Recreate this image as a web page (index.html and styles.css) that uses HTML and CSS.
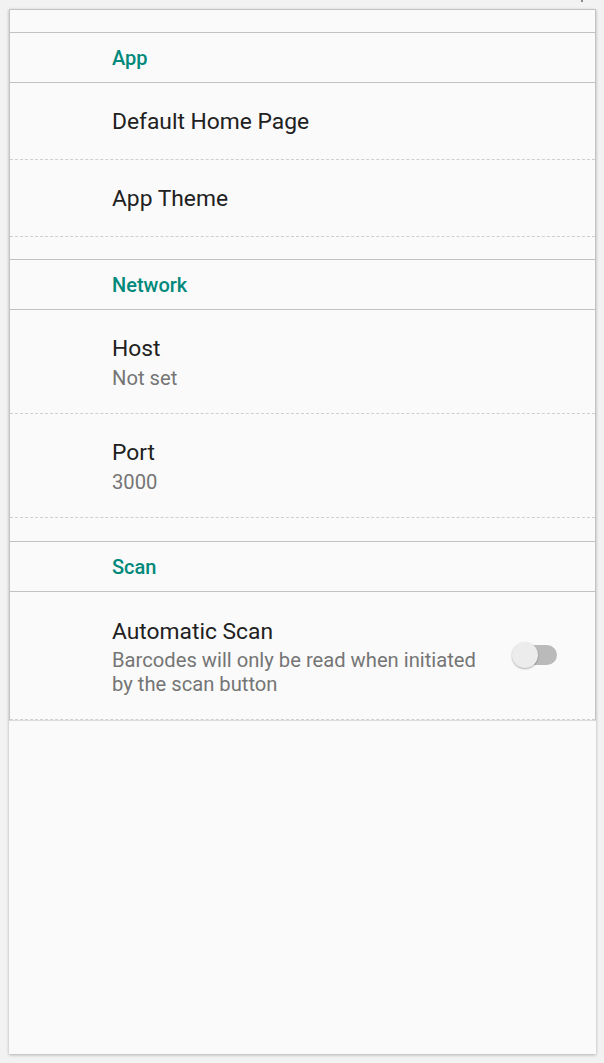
FILE: index.html
```html
<!DOCTYPE html>
<html>
<head>
<meta charset="utf-8">
<link rel="stylesheet" href="styles.css">
</head>
<body>
<span class="corner-mark"></span>
<div class="panel">
  <div class="list">
    <div class="spacer"></div>
    <div class="header">App</div>
    <div class="item single"><div class="text"><div class="title">Default Home Page</div></div></div>
    <div class="item single"><div class="text"><div class="title">App Theme</div></div></div>
    <div class="spacer"></div>
    <div class="header">Network</div>
    <div class="item double"><div class="text"><div class="title">Host</div><div class="sub">Not set</div></div></div>
    <div class="item double"><div class="text"><div class="title">Port</div><div class="sub">3000</div></div></div>
    <div class="spacer tall"></div>
    <div class="header">Scan</div>
    <div class="item triple">
      <div class="text">
        <div class="title">Automatic Scan</div>
        <div class="sub">Barcodes will only be read when initiated by the scan button</div>
      </div>
      <div class="switch"><span class="track"></span><span class="thumb"></span></div>
    </div>
  </div>
</div>
</body>
</html>
```
FILE: styles.css
```css
html, body {
  margin: 0;
  padding: 0;
}
body {
  background: #f2f2f2;
  font-family: Roboto, "Noto Sans", sans-serif;
  position: relative;
  width: 604px;
  height: 1063px;
  overflow: hidden;
}
.corner-mark {
  position: absolute;
  left: 581px;
  top: 0;
  width: 2px;
  height: 2px;
  background: #8a8a8a;
}
.panel {
  position: relative;
  margin: 9px 0 0 9px;
  width: 587px;
  height: 1045px;
  background: #fafafa;
  box-shadow: 0 1px 3px rgba(0,0,0,0.28);
}
.list {
  border: 1px solid #c4c4c4;
  border-bottom: 1px solid #dcdcdc;
}
.spacer {
  height: 22px;
}
.spacer.tall {
  height: 23px;
}
.header {
  height: 49px;
  padding-top: 1px;
  box-sizing: content-box;
  border-top: 1px solid #c2c2c2;
  border-bottom: 1px solid #c2c2c2;
  display: flex;
  align-items: center;
  padding-left: 102px;
  color: #00897b;
  font-size: 20px;
  font-weight: 500;
}
.header {
  height: 48px;
}
.item {
  display: flex;
  align-items: flex-start;
  padding-left: 102px;
  padding-right: 38px;
  border-bottom: 1px dashed #cfcfcf;
  box-sizing: border-box;
}
.item.single {
  height: 77px;
  padding-top: 2px;
  align-items: center;
}
.item.double {
  height: 104px;
  padding-top: 24px;
}
.item.triple {
  height: 128px;
  padding-top: 25px;
}
.text {
  flex: 1;
}
.title {
  font-size: 22.8px;
  line-height: 30px;
  color: #212121;
}
.single .title {
  line-height: 28px;
}
.sub {
  font-size: 20.2px;
  line-height: 24px;
  margin-top: 2px;
  color: #757575;
}
.triple .sub {
  margin-top: 1px;
}
.triple .text {
  flex: 0 0 380px;
}
.switch {
  position: relative;
  width: 46px;
  height: 28px;
  margin-top: 24px;
  margin-left: auto;
  flex: none;
}
.track {
  position: absolute;
  left: 12px;
  top: 4px;
  width: 34px;
  height: 20px;
  border-radius: 10px;
  background: #bababa;
}
.thumb {
  position: absolute;
  left: 1px;
  top: 1px;
  width: 26px;
  height: 26px;
  border-radius: 50%;
  background: #ececec;
  box-shadow: 0 1px 2px rgba(0,0,0,0.3);
}
```
